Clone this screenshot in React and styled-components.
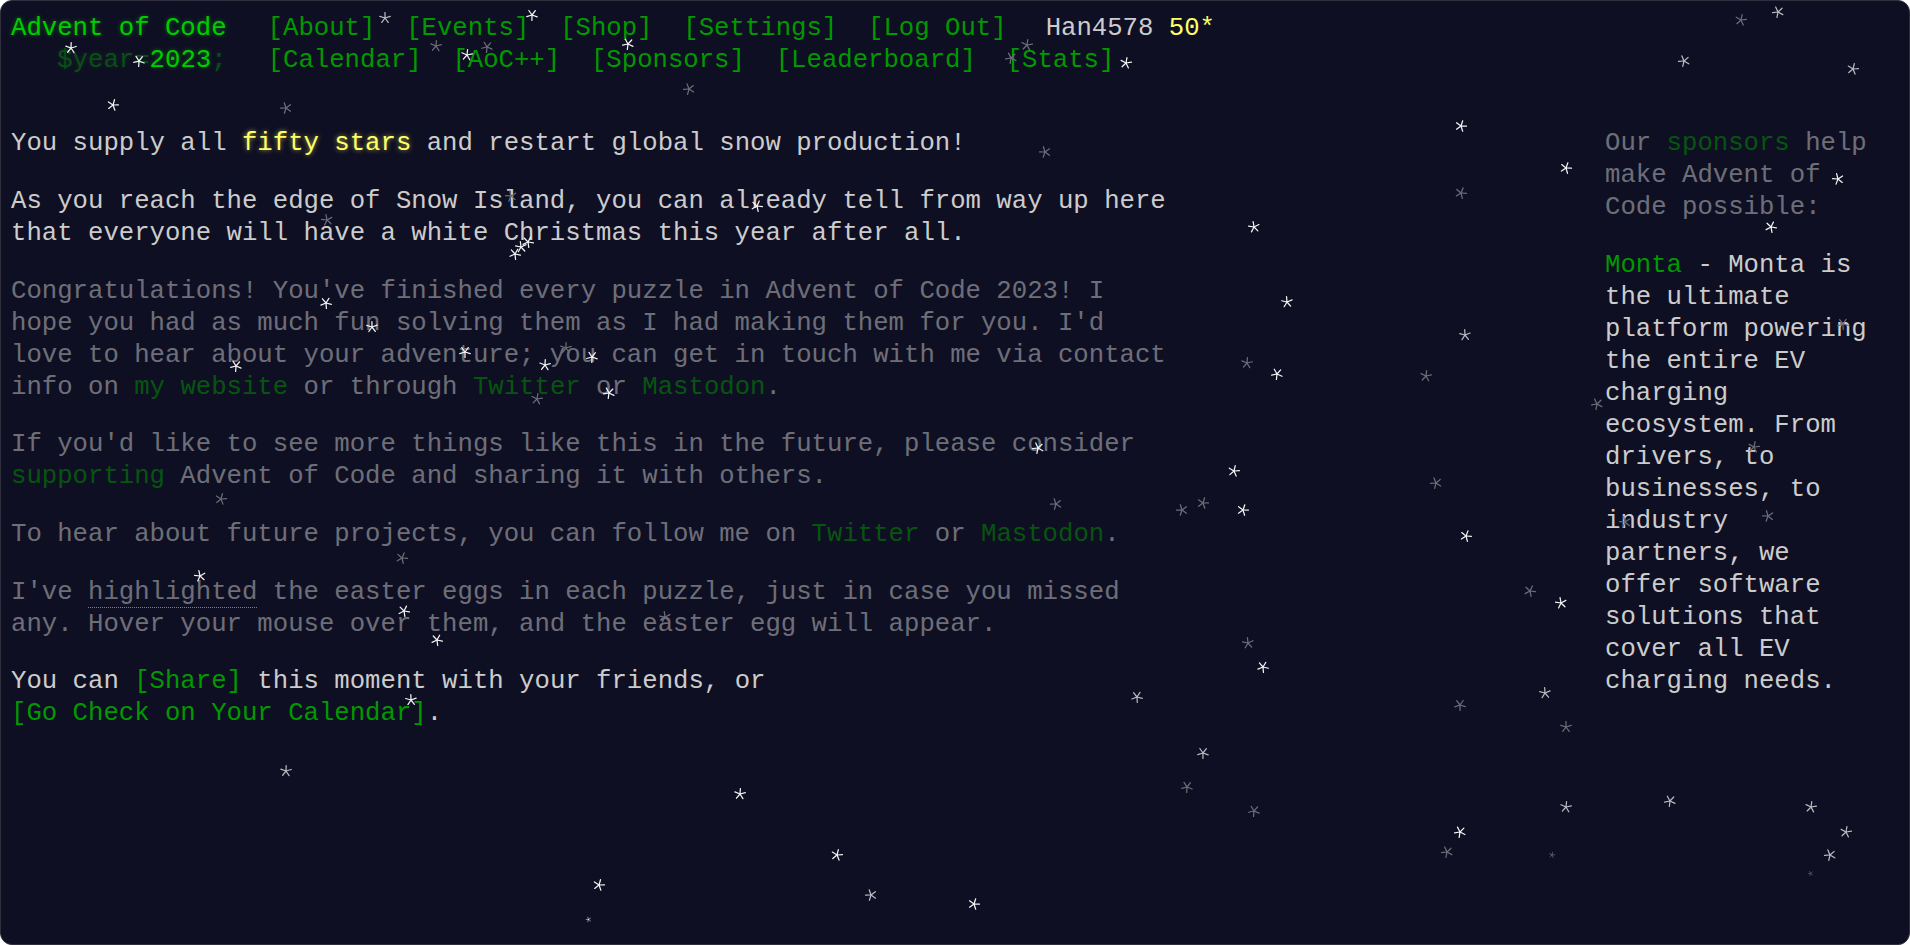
import React from 'react';
import styled, { createGlobalStyle } from 'styled-components';

const GlobalStyle = createGlobalStyle`
  html, body {
    margin: 0;
    padding: 0;
    background: #ffffff;
  }
`;

/* Styled Components */
const Frame = styled.div`
  position: relative;
  box-sizing: border-box;
  height: 945px;
  overflow: hidden;
  padding: 12px 10px 10px;
  background: #0f0f23;
  border: 1px solid #2e2e3c;
  border-radius: 12px;
  color: #cccccc;
  font-family: "Liberation Mono", "DejaVu Sans Mono", monospace;
  font-size: 25.67px;
  line-height: 32px;
`;

const Header = styled.header`
  white-space: nowrap;
  margin-bottom: 2em;
`;

const HeaderRow = styled.div``;

const Title = styled.h1`
  display: inline-block;
  margin: 0;
  padding-right: 1em;
  font-size: 1em;
  font-weight: normal;
  white-space: pre;
`;

const GlowLink = styled.a`
  color: #00cc00;
  text-decoration: none;
  text-shadow: 0 0 4px rgba(0, 204, 0, 0.5);
`;

const TitleWrap = styled.span`
  color: #00cc00;
  opacity: 0.33;
  text-shadow: 0 0 4px rgba(0, 204, 0, 0.5);
`;

const Nav = styled.nav`
  display: inline-block;
`;

const NavList = styled.ul`
  list-style: none;
  padding: 0;
  margin: 0;
  display: inline-block;
`;

const NavItem = styled.li`
  display: inline-block;
  padding: 0 0.6em;
`;

const Link = styled.a`
  color: #009900;
  text-decoration: none;
  white-space: ${(p) => (p.$nowrap ? 'nowrap' : 'normal')};
`;

const User = styled.div`
  display: inline-block;
  margin-left: 0.92em;
  color: #cccccc;
`;

const StarCount = styled.span`
  color: #ffff66;
`;

const Main = styled.main`
  display: flex;
  justify-content: space-between;
  align-items: flex-start;
`;

const Article = styled.article`
  width: 45em;
`;

const Para = styled.p`
  margin: 0 0 1em;
  opacity: ${(p) => (p.$quiet ? 0.5 : 1)};
`;

const GoldStar = styled.em`
  font-style: normal;
  color: #ffff66;
  text-shadow: 0 0 5px rgba(255, 255, 102, 0.6);
`;

const Easter = styled.span`
  border-bottom: 1px dotted #ffff66;
`;

const Sidebar = styled.aside`
  width: 275px;
  margin-right: 19px;
`;

const SponsorNote = styled.div`
  opacity: 0.5;
  margin-bottom: 1em;
`;

const Sponsor = styled.div``;

const Flake = styled.svg`
  position: absolute;
  pointer-events: none;
  overflow: visible;
  color: ${(p) => (p.$tone === 1 ? '#f4f4f6' : p.$tone === 2 ? '#b9b9c0' : '#6d6d78')};
`;

// snowflakes: x, y, tone (1 bright, 2 mid, 3 dim), size
const flakes = [
  [384, 17, 2], [531, 14, 1], [70, 47, 1], [138, 60, 1], [435, 45, 3], [486, 46, 3],
  [466, 54, 1], [627, 43, 1], [1026, 44, 3], [1010, 57, 3], [1125, 62, 1],
  [1777, 11, 2], [1740, 19, 3], [1683, 60, 2], [1852, 68, 2], [688, 88, 3],
  [112, 104, 1], [285, 107, 3], [1460, 125, 1], [1044, 151, 3], [1565, 167, 1],
  [1837, 178, 1], [1460, 192, 3], [510, 195, 3], [756, 205, 1], [326, 219, 3],
  [1770, 226, 1], [1253, 226, 1], [527, 241, 1], [520, 246, 1], [514, 253, 1],
  [1286, 301, 1], [325, 302, 1], [1464, 334, 2], [1842, 323, 3], [371, 326, 1],
  [464, 351, 1], [565, 347, 3], [591, 356, 1], [544, 364, 1], [235, 365, 1],
  [1246, 362, 3], [1276, 373, 1], [1425, 375, 3], [608, 392, 1], [536, 398, 3],
  [1596, 403, 3], [1753, 446, 3], [1037, 447, 1], [1233, 470, 1], [1435, 482, 3],
  [220, 498, 3], [1055, 503, 3], [1202, 502, 3], [1181, 509, 3], [1242, 509, 1],
  [1767, 515, 3], [1465, 535, 1], [1624, 521, 3], [401, 557, 3], [199, 575, 1],
  [1529, 590, 3], [1560, 602, 1], [403, 610, 1], [664, 616, 3], [436, 639, 1],
  [1247, 642, 3], [1262, 666, 1], [1544, 692, 2], [1136, 696, 2], [410, 699, 1],
  [1459, 704, 3], [1565, 726, 3], [1202, 752, 2], [285, 770, 2], [1186, 786, 3],
  [739, 793, 1], [1253, 810, 3], [1565, 806, 2], [1669, 800, 2], [1810, 806, 2],
  [1459, 831, 1], [1845, 831, 2], [1446, 851, 3], [1551, 854, 3, 6], [1829, 854, 2],
  [836, 854, 1], [1809, 872, 3, 5], [598, 884, 1], [870, 894, 2], [973, 903, 1],
  [587, 918, 1, 5],
];

const spokes = [0, 72, 144, 216, 288];

const SnowFlake = ({ x, y, tone, size = 12, rot }) => (
  <Flake
    $tone={tone}
    width={size}
    height={size}
    viewBox="-6 -6 12 12"
    style={{ left: x - size / 2, top: y - size / 2 }}
  >
    <g transform={`rotate(${rot})`} stroke="currentColor" strokeWidth="1.25" strokeLinecap="round">
      {spokes.map((a) => (
        <line key={a} x1="0" y1="0" x2="0" y2="-5.5" transform={`rotate(${a})`} />
      ))}
    </g>
  </Flake>
);

const App = () => {
  return (
    <>
      <GlobalStyle />
      <Frame>
        <Header>
          <HeaderRow>
            <Title>
              <GlowLink href="#">Advent of Code</GlowLink>
            </Title>
            <Nav>
              <NavList>
                <NavItem><Link href="#">[About]</Link></NavItem>
                <NavItem><Link href="#">[Events]</Link></NavItem>
                <NavItem><Link href="#">[Shop]</Link></NavItem>
                <NavItem><Link href="#">[Settings]</Link></NavItem>
                <NavItem><Link href="#">[Log Out]</Link></NavItem>
              </NavList>
            </Nav>
            <User>
              Han4578 <StarCount>50*</StarCount>
            </User>
          </HeaderRow>
          <HeaderRow>
            <Title>
              {'   '}
              <TitleWrap>$year=</TitleWrap>
              <GlowLink href="#">2023</GlowLink>
              <TitleWrap>;</TitleWrap>
            </Title>
            <Nav>
              <NavList>
                <NavItem><Link href="#">[Calendar]</Link></NavItem>
                <NavItem><Link href="#">[AoC++]</Link></NavItem>
                <NavItem><Link href="#">[Sponsors]</Link></NavItem>
                <NavItem><Link href="#">[Leaderboard]</Link></NavItem>
                <NavItem><Link href="#">[Stats]</Link></NavItem>
              </NavList>
            </Nav>
          </HeaderRow>
        </Header>

        <Main>
          <Article>
            <Para>
              You supply all <GoldStar>fifty stars</GoldStar> and restart global snow production!
            </Para>
            <Para>
              As you reach the edge of Snow Island, you can already tell from way up here that
              everyone will have a white Christmas this year after all.
            </Para>
            <Para $quiet>
              Congratulations! You've finished every puzzle in Advent of Code 2023! I hope you had
              as much fun solving them as I had making them for you. I'd love to hear about your
              adventure; you can get in touch with me via contact info on{' '}
              <Link href="#">my website</Link> or through <Link href="#">Twitter</Link> or{' '}
              <Link href="#">Mastodon</Link>.
            </Para>
            <Para $quiet>
              If you'd like to see more things like this in the future, please consider{' '}
              <Link href="#">supporting</Link> Advent of Code and sharing it with others.
            </Para>
            <Para $quiet>
              To hear about future projects, you can follow me on <Link href="#">Twitter</Link> or{' '}
              <Link href="#">Mastodon</Link>.
            </Para>
            <Para $quiet>
              I've <Easter>highlighted</Easter> the easter eggs in each puzzle, just in case you
              missed any. Hover your mouse over them, and the easter egg will appear.
            </Para>
            <Para>
              You can <Link href="#">[Share]</Link> this moment with your friends, or{' '}
              <Link href="#" $nowrap>[Go Check on Your Calendar]</Link>.
            </Para>
          </Article>

          <Sidebar>
            <SponsorNote>
              Our <Link href="#">sponsors</Link> help make Advent of Code possible:
            </SponsorNote>
            <Sponsor>
              <Link href="#">Monta</Link> - Monta is the ultimate platform powering the entire EV
              charging ecosystem. From drivers, to businesses, to industry partners, we offer
              software solutions that cover all EV charging needs.
            </Sponsor>
          </Sidebar>
        </Main>

        {flakes.map(([x, y, tone, size], i) => (
          <SnowFlake key={i} x={x} y={y} tone={tone} size={size} rot={(i * 37) % 72} />
        ))}
      </Frame>
    </>
  );
};

export default App;
